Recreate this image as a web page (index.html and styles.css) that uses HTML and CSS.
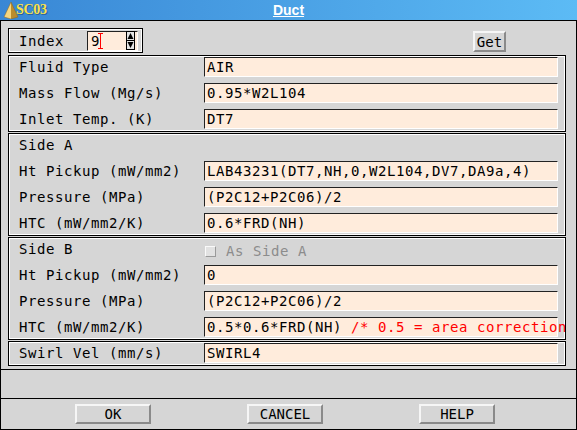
FILE: index.html
```html
<!DOCTYPE html>
<html>
<head>
<meta charset="utf-8">
<title>Duct</title>
<link rel="stylesheet" href="styles.css">
</head>
<body>
<div class="window">
  <div class="titlebar">
    <div class="logo">
      <svg width="18" height="18" viewBox="0 0 18 18">
        <polygon points="9,1 2,16 9,18" fill="#f5d680"/>
        <polygon points="9,1 9,18 16,16" fill="#bb8c2e"/>
        <polygon points="9,1 2,16 9,18 16,16" fill="none" stroke="#8a6420" stroke-width="0.5"/>
      </svg>
      <span class="logo-text">SC03</span>
    </div>
    <div class="title">Duct</div>
    <div></div>
  </div>
  <div class="body">
    <div class="main">
      <div class="index-row">
        <div class="index-box">
          <span class="index-label">Index</span>
          <div class="spin-field">
            <span class="spin-value">9</span>
            <svg class="caret" width="5" height="16" viewBox="0 0 5 16">
              <path d="M0 0.5H5M0 15.5H5M2.5 0V16" stroke="#ff0000" stroke-width="1" fill="none"/>
            </svg>
            <svg class="spinner" width="9" height="19" viewBox="0 0 9 19">
              <rect x="0.5" y="0.5" width="8" height="18" fill="#e4e4e4" stroke="#000"/>
              <line x1="0" y1="9.5" x2="9" y2="9.5" stroke="#000"/>
              <polygon points="4.5,2 1.5,8 7.5,8" fill="#000"/>
              <polygon points="1.5,11 7.5,11 4.5,17" fill="#000"/>
            </svg>
          </div>
        </div>
        <button class="btn get">Get</button>
      </div>

      <div class="group">
        <div class="row"><span class="label">Fluid Type</span><div class="field">AIR</div></div>
        <div class="row"><span class="label">Mass Flow (Mg/s)</span><div class="field">0.95*W2L104</div></div>
        <div class="row"><span class="label">Inlet Temp. (K)</span><div class="field">DT7</div></div>
      </div>

      <div class="group">
        <div class="row"><span class="label">Side A</span></div>
        <div class="row"><span class="label">Ht Pickup (mW/mm2)</span><div class="field">LAB43231(DT7,NH,0,W2L104,DV7,DA9a,4)</div></div>
        <div class="row"><span class="label">Pressure (MPa)</span><div class="field">(P2C12+P2C06)/2</div></div>
        <div class="row"><span class="label">HTC (mW/mm2/K)</span><div class="field">0.6*FRD(NH)</div></div>
      </div>

      <div class="group">
        <div class="row"><span class="label">Side B</span>
          <div class="check"><span class="box"></span><span class="check-label">As Side A</span></div>
        </div>
        <div class="row"><span class="label">Ht Pickup (mW/mm2)</span><div class="field">0</div></div>
        <div class="row"><span class="label">Pressure (MPa)</span><div class="field">(P2C12+P2C06)/2</div></div>
        <div class="row"><span class="label">HTC (mW/mm2/K)</span><div class="field">0.5*0.6*FRD(NH) <span class="comment">/* 0.5 = area correction */</span></div></div>
      </div>

      <div class="group">
        <div class="row"><span class="label">Swirl Vel (mm/s)</span><div class="field">SWIRL4</div></div>
      </div>
    </div>
    <div class="message"></div>
    <div class="actions">
      <button class="btn action">OK</button>
      <button class="btn action">CANCEL</button>
      <button class="btn action">HELP</button>
    </div>
  </div>
</div>
</body>
</html>
```
FILE: styles.css
```css
* { box-sizing: border-box; }
html, body { margin: 0; padding: 0; }
body {
  width: 577px;
  height: 430px;
  overflow: hidden;
  background: #d6d6d6;
  font-family: "DejaVu Sans Mono", "Liberation Mono", monospace;
  font-size: 14px;
  color: #000;
}
.window {
  width: 577px;
  height: 430px;
  display: flex;
  flex-direction: column;
}
.titlebar {
  height: 20px;
  flex: none;
  background: linear-gradient(to right, #3987d5, #5cbbf5);
  display: grid;
  grid-template-columns: 1fr auto 1fr;
  align-items: center;
}
.logo {
  display: flex;
  align-items: center;
  padding-left: 2px;
}
.logo svg { display: block; }
.logo-text {
  font-family: "Liberation Serif", serif;
  font-weight: bold;
  font-size: 14px;
  color: #fbe24a;
  margin-left: -4px;
  letter-spacing: -0.3px;
  text-shadow: 1px 1px 0 #2b5f95;
}
.title {
  font-family: "Liberation Sans", Arial, sans-serif;
  font-weight: bold;
  font-size: 14px;
  color: #fff;
  text-decoration: underline;
  line-height: 20px;
}
.body {
  flex: 1;
  border: 1px solid #000;
  display: flex;
  flex-direction: column;
}
.main {
  padding: 7px 10px 3px 7px;
  border-bottom: 1px solid #000;
  display: flex;
  flex-direction: column;
  gap: 1px;
}
.index-row {
  display: flex;
  height: 25px;
  margin-bottom: 1px;
}
.index-box {
  width: 135px;
  height: 25px;
  border: 1px solid #000;
  box-shadow: inset 0 0 0 1px #fff;
  display: flex;
  align-items: center;
  padding-left: 10px;
}
.index-label {
  width: 68px;
  letter-spacing: 0.57px;
}
.spin-field {
  width: 51px;
  height: 20px;
  background: #ffecdc;
  border-top: 1px solid #222;
  border-left: 1px solid #222;
  border-bottom: 1px solid #fff;
  border-right: 1px solid #fff;
  display: flex;
  align-items: center;
  padding-left: 3px;
}
.spin-value { line-height: 18px; }
.caret { display: block; margin-left: -1px; }
.spinner { display: block; margin-left: auto; margin-right: 2px; }
.btn {
  font-family: "DejaVu Sans Mono", "Liberation Mono", monospace;
  font-size: 14px;
  color: #000;
  background: #d6d6d6;
  border-top: 2px solid #f6f6f6;
  border-left: 2px solid #f6f6f6;
  border-bottom: 2px solid #8a8a8a;
  border-right: 2px solid #8a8a8a;
  padding: 0;
  margin: 0;
  line-height: 16px;
}
.get {
  width: 33px;
  height: 21px;
  margin-left: 330px;
  margin-top: 3px;
}
.group {
  border: 1px solid #000;
  box-shadow: inset 0 0 0 1px #fff;
  padding: 1px 7px 2px 10px;
  display: flex;
  flex-direction: column;
  gap: 6px;
  overflow: hidden;
}
.row {
  display: grid;
  grid-template-columns: 185px 354px;
  height: 20px;
  align-items: center;
}
.label {
  letter-spacing: 0.57px;
  white-space: pre;
}
.field {
  height: 20px;
  background: #ffecdc;
  border-top: 1px solid #222;
  border-left: 1px solid #222;
  border-bottom: 1px solid #fff;
  border-right: 1px solid #fff;
  padding-left: 2px;
  line-height: 18px;
  letter-spacing: 0.57px;
  white-space: pre;
}
.comment { color: #ff0000; }
.check {
  display: flex;
  align-items: center;
  padding-left: 1px;
  padding-top: 4px;
}
.box {
  width: 11px;
  height: 11px;
  background: #e2e2e2;
  border-top: 1px solid #fafafa;
  border-left: 1px solid #fafafa;
  border-bottom: 1px solid #9a9a9a;
  border-right: 1px solid #9a9a9a;
}
.check-label {
  margin-left: 10px;
  color: #8c8c8c;
  letter-spacing: 0.57px;
}
.message {
  height: 29px;
  border-bottom: 1px solid #000;
  flex: none;
}
.actions {
  flex: 1;
  display: flex;
  align-items: flex-start;
  gap: 96px;
  padding-left: 74px;
  padding-top: 5px;
}
.action {
  width: 76px;
  height: 20px;
}
```
